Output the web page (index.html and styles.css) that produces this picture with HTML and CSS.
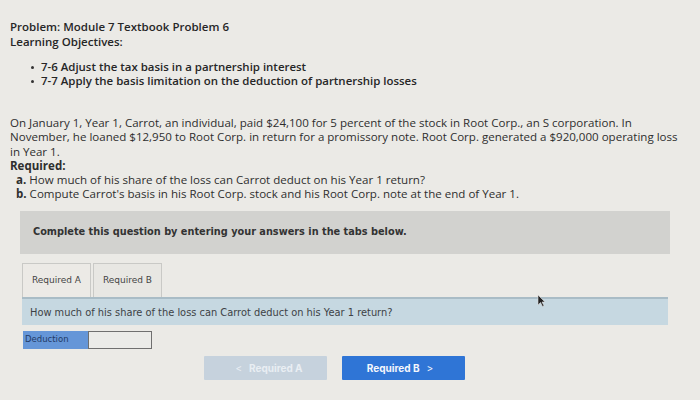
FILE: index.html
```html
<!DOCTYPE html>
<html>
<head>
<meta charset="utf-8">
<link rel="stylesheet" href="styles.css">
</head>
<body>
<div class="page">
  <div class="head">
    <div class="title">Problem: Module 7 Textbook Problem 6</div>
    <div class="title">Learning Objectives:</div>
  </div>
  <ul class="objectives">
    <li>7-6 Adjust the tax basis in a partnership interest</li>
    <li>7-7 Apply the basis limitation on the deduction of partnership losses</li>
  </ul>
  <div class="problem">
    <p class="para">On January 1, Year 1, Carrot, an individual, paid $24,100 for 5 percent of the stock in Root Corp., an S corporation. In November, he loaned $12,950 to Root Corp. in return for a promissory note. Root Corp. generated a $920,000 operating loss in Year 1.</p>
    <div class="req">Required:</div>
    <div class="item"><b>a.</b> How much of his share of the loss can Carrot deduct on his Year 1 return?</div>
    <div class="item"><b>b.</b> Compute Carrot's basis in his Root Corp. stock and his Root Corp. note at the end of Year 1.</div>
  </div>
  <div class="banner">Complete this question by entering your answers in the tabs below.</div>
  <div class="tabs">
    <div class="tab active">Required A</div>
    <div class="tab">Required B</div>
  </div>
  <div class="question">How much of his share of the loss can Carrot deduct on his Year 1 return?</div>
  <div class="answer">
    <div class="label">Deduction</div>
    <div class="input"></div>
  </div>
  <div class="nav">
    <div class="btn disabled"><span class="chev">&lt;</span> Required A</div>
    <div class="btn primary">Required B <span class="chev">&gt;</span></div>
  </div>
  <svg class="cursor" width="9" height="13" viewBox="0 0 9 13"><path d="M1 1 L1 11 L3.5 8.5 L5.5 12.5 L7 11.8 L5 8 L8 8 Z" fill="#222" stroke="#ddd" stroke-width="0.6"/></svg>
</div>
</body>
</html>
```
FILE: styles.css
```css
html, body {
  margin: 0;
  padding: 0;
}
body {
  background: #ebeae6;
  width: 700px;
  height: 400px;
  overflow: hidden;
}
.page {
  position: relative;
  padding: 19px 0 0 10px;
  font-family: "Open Sans", "Liberation Sans", sans-serif;
  color: #2b2b2b;
}
.head .title {
  font-family: "Open Sans", sans-serif;
  font-weight: 600;
  font-size: 11.5px;
  line-height: 15px;
  color: #262626;
}
.objectives {
  margin: 11px 0 0 0;
  padding: 0 0 0 31px;
  font-weight: 600;
  font-size: 11.45px;
  line-height: 13.5px;
  color: #262626;
  list-style: none;
}
.objectives li {
  position: relative;
}
.objectives li::before {
  content: "";
  position: absolute;
  left: -10px;
  top: 6px;
  width: 3px;
  height: 3px;
  border-radius: 50%;
  background: #333;
}
.problem {
  margin-top: 29px;
  font-size: 11.55px;
  line-height: 14.3px;
  color: #2e2e2e;
  width: 672px;
}
.para {
  margin: 0;
}
.req {
  font-weight: 700;
}
.item {
  padding-left: 6px;
}
.item b {
  font-weight: 700;
}
.banner {
  margin: 9px 0 0 10px;
  width: 650px;
  height: 43px;
  box-sizing: border-box;
  padding: 15px 0 0 13px;
  background: #d2d2cf;
  font-family: "DejaVu Sans", Verdana, sans-serif;
  font-weight: 700;
  font-size: 9.75px;
  color: #333;
}
.tabs {
  display: flex;
  gap: 2px;
  margin: 9px 0 0 12px;
}
.tab {
  width: 69px;
  height: 34px;
  box-sizing: border-box;
  border: 1px solid #c9c9c6;
  border-bottom: none;
  background: #e8e7e3;
  font-family: "DejaVu Sans", Verdana, sans-serif;
  font-size: 9px;
  color: #444;
  display: flex;
  align-items: center;
  justify-content: center;
}
.tab.active {
  background: #eceae6;
}
.question {
  margin: 0 0 0 12px;
  width: 646px;
  height: 28px;
  box-sizing: border-box;
  border-top: 2px solid #a9bcc6;
  background: #c6d8e1;
  padding: 8px 0 0 8px;
  font-family: "DejaVu Sans", Verdana, sans-serif;
  font-size: 9.85px;
  color: #3d4246;
}
.answer {
  display: flex;
  margin: 6px 0 0 13px;
}
.label {
  width: 65px;
  height: 18px;
  box-sizing: border-box;
  background: #6596d8;
  padding: 3px 0 0 2px;
  font-family: "DejaVu Sans", Verdana, sans-serif;
  font-size: 8.5px;
  color: #233b66;
}
.input {
  width: 64px;
  height: 18px;
  box-sizing: border-box;
  border: 1.5px solid #6f6f6f;
  background: #ebebe8;
}
.nav {
  display: flex;
  gap: 15px;
  margin: 7px 0 0 194px;
}
.btn {
  width: 123px;
  height: 24px;
  box-sizing: border-box;
  display: flex;
  align-items: center;
  justify-content: center;
  font-family: "Inter", "Open Sans", sans-serif;
  font-weight: 700;
  font-size: 10px;
  border-radius: 1px;
}
.btn.disabled {
  background: #c6d2dd;
  color: #e9eef3;
}
.btn.primary {
  background: #2f75d6;
  color: #f4f7fc;
}
.chev {
  font-weight: 400;
  margin: 0 7px;
}
.cursor {
  position: absolute;
  left: 537px;
  top: 294px;
}
```
